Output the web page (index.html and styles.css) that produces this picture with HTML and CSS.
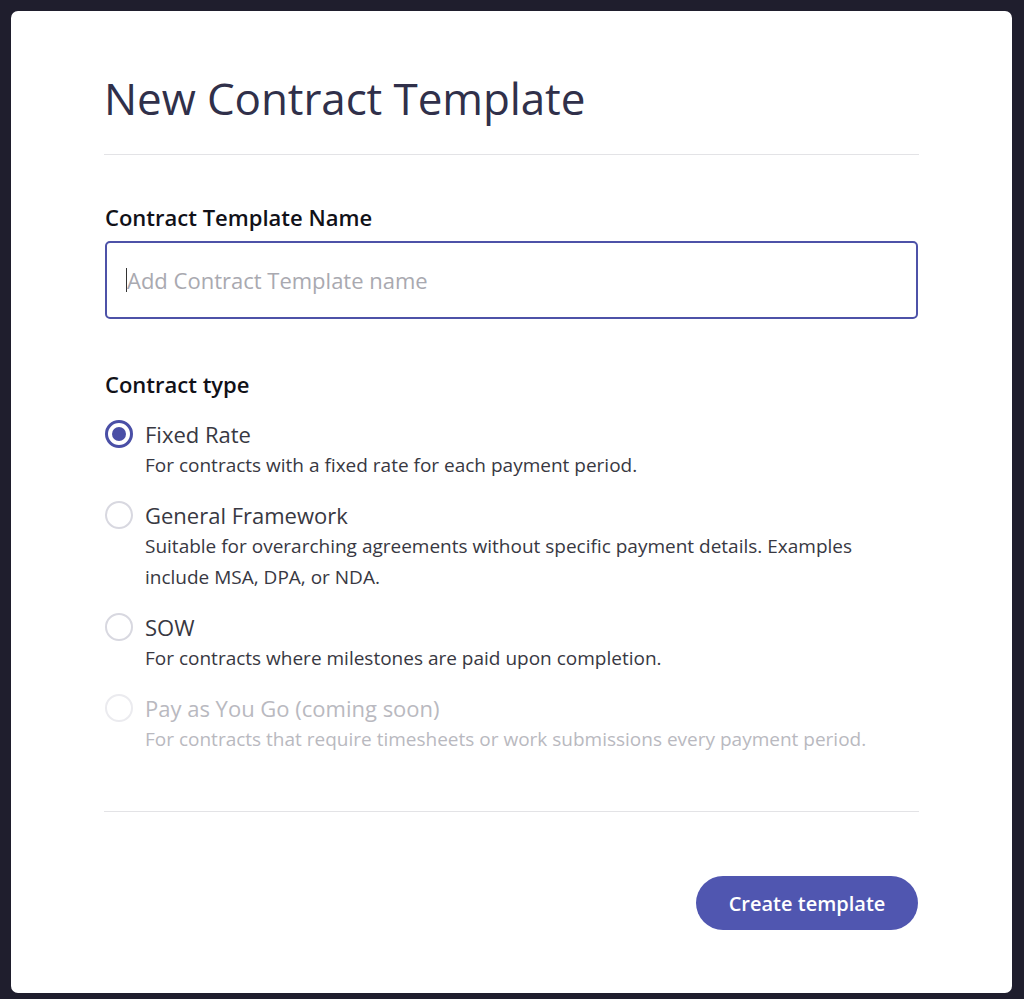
FILE: index.html
```html
<!DOCTYPE html>
<html lang="en">
<head>
<meta charset="utf-8">
<title>New Contract Template</title>
<link rel="stylesheet" href="styles.css">
</head>
<body>
<div class="modal">
  <header class="modal-header">
    <h1 class="title">New Contract Template</h1>
  </header>
  <section class="field">
    <label class="label" for="name">Contract Template Name</label>
    <div class="input"><span class="caret"></span><span class="placeholder">Add Contract Template name</span></div>
  </section>
  <section class="field types">
    <div class="label">Contract type</div>
    <div class="options">
      <div class="option">
        <span class="radio checked"></span>
        <div class="option-body">
          <div class="option-title">Fixed Rate</div>
          <div class="option-desc">For contracts with a fixed rate for each payment period.</div>
        </div>
      </div>
      <div class="option">
        <span class="radio"></span>
        <div class="option-body">
          <div class="option-title">General Framework</div>
          <div class="option-desc">Suitable for overarching agreements without specific payment details. Examples include MSA, DPA, or NDA.</div>
        </div>
      </div>
      <div class="option">
        <span class="radio"></span>
        <div class="option-body">
          <div class="option-title">SOW</div>
          <div class="option-desc">For contracts where milestones are paid upon completion.</div>
        </div>
      </div>
      <div class="option disabled">
        <span class="radio"></span>
        <div class="option-body">
          <div class="option-title">Pay as You Go (coming soon)</div>
          <div class="option-desc">For contracts that require timesheets or work submissions every payment period.</div>
        </div>
      </div>
    </div>
  </section>
  <footer class="modal-footer">
    <button class="btn-primary">Create template</button>
  </footer>
</div>
</body>
</html>
```
FILE: styles.css
```css
html, body {
  margin: 0;
  padding: 0;
  background: #1f1e2d;
  font-family: "Open Sans", "Noto Sans", sans-serif;
}
body {
  padding: 11px 12px 6px 11px;
  height: 999px;
  box-sizing: border-box;
}
.modal {
  background: #ffffff;
  border-radius: 7px;
  width: 1001px;
  height: 982px;
  box-sizing: border-box;
  padding: 0 93px 0 93px;
  display: flex;
  flex-direction: column;
}
.modal-header {
  padding-top: 62px;
  padding-bottom: 31px;
  border-bottom: 1px solid #e3e3e6;
}
.title {
  margin: 0;
  font-size: 44px;
  line-height: 50px;
  font-weight: 400;
  color: #30304a;
  letter-spacing: -0.1px;
}
.field {
  padding: 0 1px 0 1px;
}
.label {
  display: block;
  font-size: 22px;
  line-height: 28px;
  font-weight: 600;
  color: #111118;
  margin-top: 48px;
  margin-bottom: 10px;
}
.types .label {
  margin-top: 51px;
  margin-bottom: 20px;
}
.input {
  height: 78px;
  box-sizing: border-box;
  border: 2.5px solid #4d52a8;
  border-radius: 5px;
  display: flex;
  align-items: center;
  padding-left: 19px;
}
.caret {
  width: 1px;
  height: 24px;
  background: #333;
}
.placeholder {
  font-size: 22px;
  color: #a9a9b0;
}
.options {
  display: flex;
  flex-direction: column;
  gap: 18px;
}
.option {
  display: flex;
  align-items: flex-start;
  gap: 12px;
}
.radio {
  flex: none;
  width: 28px;
  height: 28px;
  box-sizing: border-box;
  border: 2.5px solid #d8d8e0;
  border-radius: 50%;
  margin-top: 2px;
  position: relative;
}
.radio.checked {
  border: 3px solid #4a4fa6;
}
.radio.checked::after {
  content: "";
  position: absolute;
  left: 4px;
  top: 4px;
  width: 14px;
  height: 14px;
  border-radius: 50%;
  background: #4a4fa6;
}
.option-title {
  font-size: 22px;
  line-height: 32px;
  color: #383842;
}
.option-desc {
  font-size: 19px;
  line-height: 31px;
  color: #383842;
  max-width: 740px;
}
.option.disabled .radio {
  border-color: #ebebef;
}
.option.disabled .option-title,
.option.disabled .option-desc {
  color: #b9b9c0;
}
.modal-footer {
  margin-top: 56px;
  border-top: 1px solid #e3e3e6;
  display: flex;
  justify-content: flex-end;
  padding-top: 64px;
  padding-right: 1px;
}
.btn-primary {
  font-family: "Open Sans", "Noto Sans", sans-serif;
  background: #5056b0;
  color: #ffffff;
  border: none;
  border-radius: 27px;
  height: 54px;
  width: 222px;
  font-size: 20px;
  font-weight: 600;
  cursor: pointer;
}
```
